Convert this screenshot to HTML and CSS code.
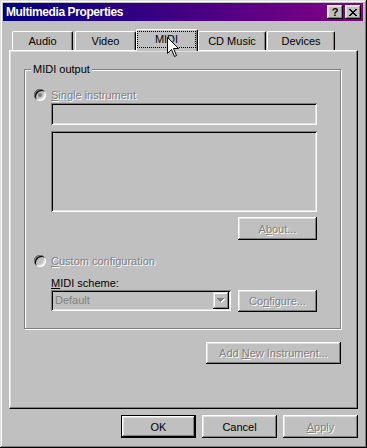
FILE: index.html
```html
<!DOCTYPE html>
<html lang="en">
<head>
  <meta charset="UTF-8">
  <title>Multimedia Properties</title>
  <link rel="stylesheet" href="styles.css">
</head>
<body>
  <div class="window">
    <div class="titlebar">
      <span class="title">Multimedia Properties</span>
      <div class="caption-btns">
        <span class="cap-btn help">?</span>
        <span class="cap-btn">
          <svg width="8" height="7" viewBox="0 0 8 7" shape-rendering="crispEdges">
            <path d="M0 0h2v1h-2z M6 0h2v1h-2z M1 1h2v1h-2z M5 1h2v1h-2z M2 2h4v1h-4z M3 3h2v1h-2z M2 4h4v1h-4z M1 5h2v1h-2z M5 5h2v1h-2z M0 6h2v1h-2z M6 6h2v1h-2z" fill="#000"/>
          </svg>
        </span>
      </div>
    </div>

    <div class="tabs">
      <div class="tab tab-audio">Audio</div>
      <div class="tab tab-video">Video</div>
      <div class="tab tab-active"><span class="focus">MIDI</span></div>
      <div class="tab tab-cd">CD Music</div>
      <div class="tab tab-devices">Devices</div>
    </div>

    <div class="panel">
      <fieldset class="group">
        <legend>MIDI output</legend>
        <div class="option first">
          <span class="radio checked"></span>
          <span class="disabled"><u>S</u>ingle instrument</span>
        </div>
        <div class="indent">
          <div class="edit sunken"></div>
          <div class="listbox sunken"></div>
          <div class="btn-row">
            <button class="btn btn-side" disabled>A<u>b</u>out...</button>
          </div>
        </div>
        <div class="option custom">
          <span class="radio"></span>
          <span class="disabled"><u>C</u>ustom configuration</span>
        </div>
        <div class="indent">
          <div class="label"><u>M</u>IDI scheme:</div>
          <div class="scheme-row">
            <div class="combo sunken">
              <span class="combo-text">Default</span>
              <span class="combo-btn">
                <svg width="8" height="5" viewBox="0 0 8 5" shape-rendering="crispEdges">
                  <path d="M1 1h7l-3.5 4z" fill="#fff"/>
                  <path d="M0 0h7l-3.5 4z" fill="#808080"/>
                </svg>
              </span>
            </div>
            <button class="btn btn-side" disabled>Co<u>n</u>figure...</button>
          </div>
        </div>
      </fieldset>
      <div class="add-row">
        <button class="btn btn-add" disabled>Add <u>N</u>ew Instrument...</button>
      </div>
    </div>

    <div class="dialog-btns">
      <button class="btn btn-dialog default">OK</button>
      <button class="btn btn-dialog">Cancel</button>
      <button class="btn btn-dialog" disabled><u>A</u>pply</button>
    </div>

    <!-- mouse pointer over the MIDI tab -->
    <svg class="cursor" width="13" height="21" viewBox="0 0 13 21">
      <path d="M0.5 0.5 V16.5 L4.5 12.5 L7.5 19.5 L9.5 18.5 L6.5 11.5 H11.5 Z" fill="#fff" stroke="#000" stroke-width="1"/>
    </svg>
  </div>
</body>
</html>
```

FILE: styles.css
```css
* {
  box-sizing: border-box;
}

body {
  margin: 0;
  background: #c0c0c0;
  font-family: "Liberation Sans", Arial, sans-serif;
  font-size: 11px;
  color: #000;
}

.window {
  position: relative;
  width: 367px;
  height: 448px;
  padding: 3px;
  background: #c0c0c0;
  box-shadow: inset -1px -1px #000, inset 1px 1px #dfdfdf,
              inset -2px -2px #808080, inset 2px 2px #fff;
}

/* title bar */
.titlebar {
  display: flex;
  align-items: center;
  justify-content: space-between;
  height: 18px;
  margin-right: 1px;
  padding: 0 2px 0 3px;
  background: linear-gradient(to right, #000080, #860086);
  color: #fff;
}

.title {
  font-weight: bold;
  font-size: 12px;
  letter-spacing: -0.4px;
}

.caption-btns {
  display: flex;
  gap: 2px;
}

.cap-btn {
  display: flex;
  align-items: center;
  justify-content: center;
  width: 16px;
  height: 14px;
  background: #c0c0c0;
  color: #000;
  box-shadow: inset -1px -1px #000, inset 1px 1px #fff,
              inset -2px -2px #808080, inset 2px 2px #dfdfdf;
}

.cap-btn.help {
  font-weight: bold;
  font-size: 11px;
  line-height: 14px;
}

/* tabs */
.tabs {
  display: flex;
  align-items: flex-end;
  height: 21px;
  margin-top: 8px;
  padding-left: 9px;
}

.tab {
  height: 19px;
  line-height: 18px;
  text-align: center;
  background: #c0c0c0;
  border-top: 1px solid #fff;
  border-left: 1px solid #fff;
  border-right: 1px solid #000;
  border-radius: 2px 2px 0 0;
  box-shadow: inset -1px 0 #808080;
}

.tab-audio { width: 61px; }
.tab-video { width: 61px; margin-left: 2px; }
.tab-cd { width: 68px; }
.tab-devices { width: 68px; margin-left: 1px; }

.tab-active {
  position: relative;
  z-index: 1;
  width: 62px;
  height: 22px;
  margin-bottom: -1px;
  padding: 1px 1px 0 0;
}

.focus {
  display: block;
  height: 17px;
  line-height: 15px;
  border: 1px dotted #000;
}

/* page */
.panel {
  height: 359px;
  margin: 0 6px;
  padding: 0 16px 0 14px;
  border: 1px solid;
  border-color: #fff #000 #000 #fff;
  box-shadow: inset -1px -1px #808080, inset 1px 1px #dfdfdf;
}

.group {
  margin: 12px 0 0;
  padding: 0 23px 16px 9px;
  min-width: 0;
  border: 1px solid #808080;
  box-shadow: 1px 1px 0 #fff, inset 1px 1px 0 #fff;
}

.group legend {
  margin-left: -3px;
  padding: 0 2px;
  line-height: 13px;
  background: #c0c0c0;
}

.option {
  display: flex;
  align-items: center;
  gap: 5px;
  height: 14px;
}

.option.first { margin-top: 12px; }
.option.custom { margin-top: 14px; }

.disabled {
  color: #808080;
  text-shadow: 1px 1px 0 #fff;
}

.radio {
  display: flex;
  align-items: center;
  justify-content: center;
  width: 12px;
  height: 12px;
  border-radius: 50%;
  background: #c0c0c0;
  box-shadow: inset 1px 1px #808080, inset -1px -1px #fff,
              inset 2px 2px #000, inset -2px -2px #dfdfdf;
}

.radio.checked::after {
  content: "";
  width: 4px;
  height: 4px;
  border-radius: 50%;
  background: #808080;
}

.indent {
  margin-left: 17px;
}

.sunken {
  background: #c0c0c0;
  box-shadow: inset 1px 1px #808080, inset -1px -1px #fff,
              inset 2px 2px #000, inset -2px -2px #dfdfdf;
}

.edit {
  height: 22px;
  margin-top: 1px;
}

.listbox {
  height: 81px;
  margin-top: 6px;
}

.btn-row {
  display: flex;
  justify-content: flex-end;
  margin-top: 5px;
}

.label {
  margin-top: 8px;
  line-height: 14px;
}

.scheme-row {
  display: flex;
  align-items: flex-start;
  gap: 7px;
}

.combo {
  display: flex;
  justify-content: space-between;
  width: 180px;
  height: 21px;
  padding: 2px;
}

.combo-text {
  padding-left: 2px;
  line-height: 17px;
  color: #808080;
}

.combo-btn {
  display: flex;
  align-items: center;
  justify-content: center;
  width: 16px;
  height: 17px;
  background: #c0c0c0;
  box-shadow: inset -1px -1px #000, inset 1px 1px #dfdfdf,
              inset -2px -2px #808080, inset 2px 2px #fff;
}

/* buttons */
.btn {
  padding: 0;
  border: none;
  background: #c0c0c0;
  font: inherit;
  color: #000;
  box-shadow: inset -1px -1px #000, inset 1px 1px #fff,
              inset -2px -2px #808080, inset 2px 2px #dfdfdf;
}

.btn:disabled {
  color: #808080;
  text-shadow: 1px 1px 0 #fff;
}

.btn-side {
  width: 79px;
  height: 23px;
}

.scheme-row .btn-side {
  height: 22px;
}

.add-row {
  display: flex;
  justify-content: flex-end;
  margin-top: 13px;
}

.btn-add {
  width: 135px;
  height: 22px;
}

.dialog-btns {
  display: flex;
  justify-content: flex-end;
  gap: 6px;
  margin: 6px 6px 0;
}

.btn-dialog {
  width: 75px;
  height: 23px;
}

.btn.default {
  border: 1px solid #000;
}

.cursor {
  position: absolute;
  z-index: 2;
  left: 167px;
  top: 37px;
}
```
